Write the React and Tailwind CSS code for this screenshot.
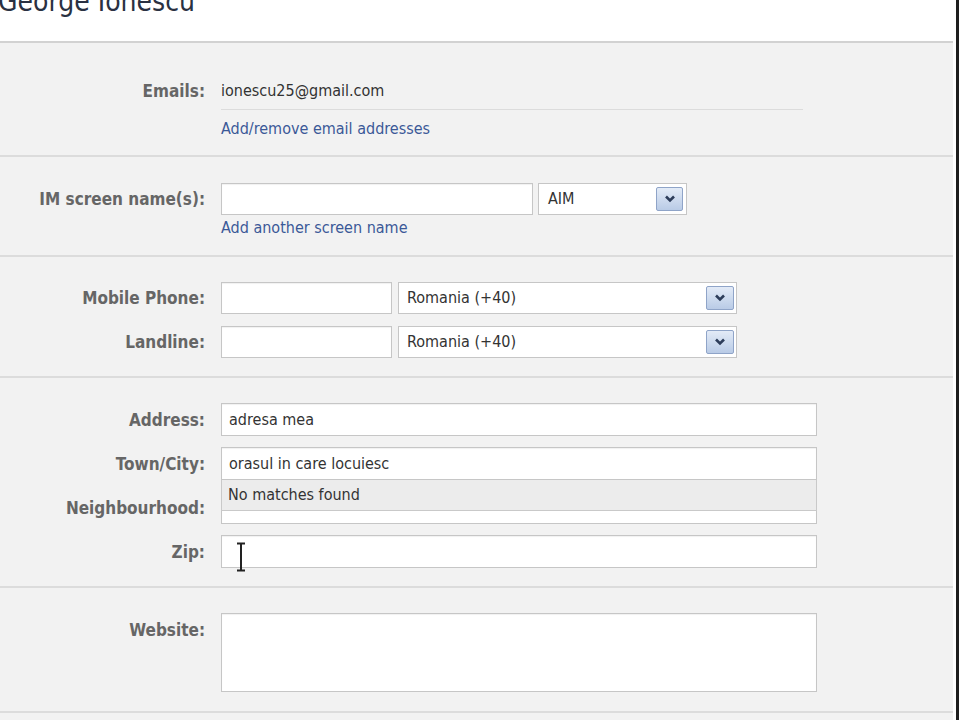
import React from "react";

const font = "font-['DejaVu_Sans_Condensed','DejaVu_Sans',sans-serif]";

function Label({ children }) {
  return (
    <div className="w-[205px] shrink-0 text-right font-bold text-[17px] leading-[20px] text-[#666666]">
      {children}
    </div>
  );
}

function Arrow({ className }) {
  return (
    <div
      className={`absolute flex items-center justify-center rounded-[2px] border border-[#8fa4c8] bg-gradient-to-b from-[#e3ebf7] to-[#b9cbe6] ${className}`}
    >
      <svg width="12" height="8" viewBox="0 0 12 8">
        <path d="M2 1.5 L6 5.5 L10 1.5" fill="none" stroke="#2d3d5a" strokeWidth="2.6" />
      </svg>
    </div>
  );
}

function Select({ value, className, arrowClass }) {
  return (
    <div
      className={`relative flex items-center h-[32px] bg-white border border-[#c6c6c6] text-[16px] text-[#333] ${className}`}
    >
      {value}
      <Arrow className={arrowClass} />
    </div>
  );
}

function Input({ value, className = "" }) {
  return (
    <div
      className={`flex items-center bg-white border border-[#c6c6c6] shadow-[inset_0_1px_1px_rgba(0,0,0,0.06)] pl-[7px] text-[16px] text-[#333] ${className}`}
    >
      {value}
    </div>
  );
}

export default function App() {
  return (
    <div className={`flex w-[960px] h-[720px] overflow-hidden bg-white ${font}`}>
      <div className="w-[953px] shrink-0 flex flex-col bg-[#f2f2f2]">
        {/* Header */}
        <div className="h-[43px] shrink-0 bg-white border-b-2 border-[#d2d2d2] overflow-hidden">
          <div className="mt-[-12px] ml-[-2px] text-[28px] leading-[28px] text-[#2a3142]">George Ionescu</div>
        </div>

        {/* Emails */}
        <div className="h-[114px] shrink-0 border-b-2 border-[#dcdcdc] pt-[36px]">
          <div className="flex items-center h-[24px]">
            <Label>Emails:</Label>
            <div className="ml-4 text-[16px] text-[#333]">ionescu25@gmail.com</div>
          </div>
          <div className="ml-[221px] mt-[6px] w-[582px] h-px bg-[#dcdcdc]" />
          <div className="ml-[221px] mt-[9px] h-[20px] leading-[20px] text-[16px] text-[#3b5998]">
            Add/remove email addresses
          </div>
        </div>

        {/* IM */}
        <div className="h-[100px] shrink-0 border-b-2 border-[#dcdcdc] pt-[26px]">
          <div className="flex items-center h-[32px]">
            <Label>IM screen name(s):</Label>
            <div className="ml-4 flex gap-[5px]">
              <Input className="w-[312px] h-[32px]" />
              <Select
                value="AIM"
                className="w-[149px] pl-[9px]"
                arrowClass="right-[3px] top-[3px] w-[27px] h-[24px]"
              />
            </div>
          </div>
          <div className="ml-[221px] mt-[3px] h-[20px] leading-[20px] text-[16px] text-[#3b5998]">
            Add another screen name
          </div>
        </div>

        {/* Phones */}
        <div className="h-[121px] shrink-0 border-b-2 border-[#dcdcdc] pt-[25px] flex flex-col gap-[12px]">
          {["Mobile Phone:", "Landline:"].map((l) => (
            <div key={l} className="flex items-center h-[32px]">
              <Label>{l}</Label>
              <div className="ml-4 flex gap-[6px]">
                <Input className="w-[171px] h-[32px]" />
                <Select
                  value="Romania (+40)"
                  className="w-[339px] pl-[8px]"
                  arrowClass="right-[2px] top-[3px] w-[28px] h-[24px]"
                />
              </div>
            </div>
          ))}
        </div>

        {/* Address */}
        <div className="h-[210px] shrink-0 border-b-2 border-[#dcdcdc] pt-[25px] flex flex-col gap-[11px]">
          <div className="flex items-center h-[33px]">
            <Label>Address:</Label>
            <Input value="adresa mea" className="ml-4 w-[596px] h-[33px]" />
          </div>
          <div className="flex items-center h-[33px]">
            <Label>Town/City:</Label>
            <div className="relative ml-4 w-[596px] h-[33px]">
              <Input value="orasul in care locuiesc" className="w-full h-full" />
              <div className="absolute z-10 left-0 top-full w-full h-[31px] flex items-center pl-[6px] bg-[#ececec] border border-t-0 border-[#c9c9c9] text-[16px] text-[#333]">
                No matches found
              </div>
            </div>
          </div>
          <div className="flex items-center h-[33px]">
            <Label>Neighbourhood:</Label>
            <Input className="ml-4 w-[596px] h-[33px]" />
          </div>
          <div className="flex items-center h-[33px]">
            <Label>Zip:</Label>
            <div className="relative ml-4 w-[596px] h-[33px]">
              <Input className="w-full h-full" />
              <svg
                className="absolute left-[15px] top-[7px]"
                width="10"
                height="30"
                viewBox="0 0 10 30"
              >
                <path d="M1 1.5 H9 M5 1.5 V28.5 M1 28.5 H9" fill="none" stroke="#222" strokeWidth="2" />
              </svg>
            </div>
          </div>
        </div>

        {/* Website */}
        <div className="h-[125px] shrink-0 border-b-2 border-[#dcdcdc] pt-[25px]">
          <div className="flex items-start">
            <div className="flex items-center h-[33px]">
              <Label>Website:</Label>
            </div>
            <Input className="ml-4 w-[596px] h-[79px]" />
          </div>
        </div>
        <div className="flex-1" />
      </div>
      <div className="w-[3px] shrink-0 bg-white" />
      <div className="w-[3px] shrink-0 bg-[#1e1e1e]" />
      <div className="flex-1 bg-white" />
    </div>
  );
}
